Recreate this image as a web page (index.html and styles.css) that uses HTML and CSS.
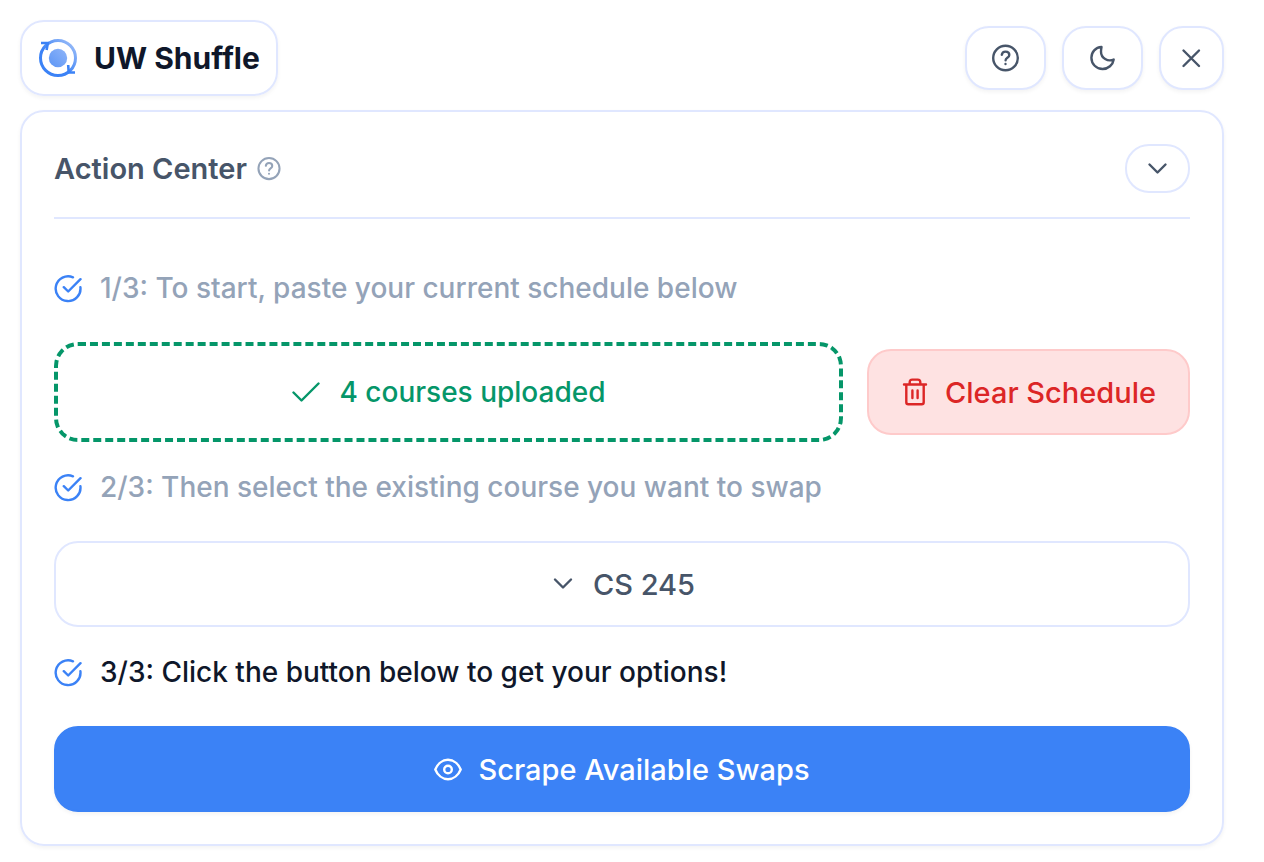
FILE: index.html
```html
<!DOCTYPE html>
<html lang="en">
<head>
  <meta charset="UTF-8">
  <meta name="viewport" content="width=device-width, initial-scale=1">
  <title>UW Shuffle</title>
  <link rel="stylesheet" href="styles.css">
</head>
<body>
  <header class="topbar">
    <div class="brand">
      <svg class="logo" viewBox="0 0 40 40" fill="none" aria-hidden="true">
        <defs>
          <linearGradient id="ring" x1="0" y1="1" x2="1" y2="0">
            <stop offset="0.4" stop-color="#3b82f6"/>
            <stop offset="0.9" stop-color="#93b8f8"/>
          </linearGradient>
          <linearGradient id="ball" x1="1" y1="0" x2="0" y2="1">
            <stop offset="0" stop-color="#8fb5f9"/>
            <stop offset="1" stop-color="#5c95f5"/>
          </linearGradient>
        </defs>
        <circle cx="20" cy="20" r="17.5" stroke="url(#ring)" stroke-width="3"/>
        <circle cx="20" cy="20" r="9.2" fill="url(#ball)"/>
        <path d="M3 5h6.800l-1.200 7M37 34.500h-6.300l-.5-7.500" stroke="#3b82f6" stroke-width="2.600"/>
      </svg>
      <h1>UW Shuffle</h1>
    </div>
    <div class="actions">
      <button class="icon-btn" type="button" aria-label="Help">
        <svg class="icon" viewBox="0 0 28 28">
          <circle cx="13.500" cy="14" r="12.300"/>
          <path d="M9.800 10.800c.3-2 1.700-3.200 3.700-3.200 2.200 0 3.800 1.300 3.800 3.300 0 2.900-3.700 2.800-3.700 5.300"/>
          <path d="M13.500 20v.1"/>
        </svg>
      </button>
      <button class="icon-btn" type="button" aria-label="Dark mode">
        <svg class="icon" viewBox="0 0 28 28">
          <path d="M12.500 3C6.500 3.300 2.400 8 2.400 13.800c0 6.200 5 11.200 11.200 11.200 5.700 0 10.300-4.100 11.100-9.500-5.800 2.600-12.700-1.300-12.700-7.700 0-1.700.2-3.200.5-4.800z"/>
        </svg>
      </button>
      <button class="icon-btn close-btn" type="button" aria-label="Close">
        <svg class="icon" viewBox="0 0 28 28">
          <path d="M5.500 6.500l15.500 15.500M21 6.500L5.500 22"/>
        </svg>
      </button>
    </div>
  </header>

  <main class="card">
    <div class="card-header">
      <h2>Action Center</h2>
      <svg class="icon hint" viewBox="0 0 28 28">
        <circle cx="14" cy="13.500" r="12.300"/>
        <path d="M10.300 10.300c.3-2 1.700-3.200 3.700-3.200 2.200 0 3.800 1.300 3.800 3.300 0 2.900-3.700 2.800-3.700 5.300"/>
        <path d="M14 19.500v.1"/>
      </svg>
      <button class="collapse-btn" type="button" aria-label="Collapse">
        <svg class="icon" viewBox="0 0 28 28"><path d="M5.500 9.500l8 8 8-8"/></svg>
      </button>
    </div>

    <p class="step done">
      <svg class="icon" viewBox="0 0 28 28">
        <path d="M19 2.300A12.400 12.400 0 1 0 26.400 12.200M9.800 12.200l4.400 4.300L26.500 4.200"/>
      </svg>
      1/3: To start, paste your current schedule below
    </p>
    <div class="upload-row">
      <div class="upload-box">
        <svg class="icon" viewBox="0 0 28 28"><path d="M1.500 14.500l8 8 17-17"/></svg>
        4 courses uploaded
      </div>
      <button class="btn clear-btn" type="button">
        <svg class="icon" viewBox="0 0 28 28">
          <path d="M3 6.500h22M5.300 6.500v17.700q0 2 2 2h13.400q2 0 2-2V6.500M8.700 6.500V4.200q0-2.600 2.600-2.600h5.400q2.600 0 2.600 2.600v2.300M11.400 12.500v7.500M16.600 12.500v7.500"/>
        </svg>
        Clear Schedule
      </button>
    </div>

    <p class="step done">
      <svg class="icon" viewBox="0 0 28 28">
        <path d="M19 2.300A12.400 12.400 0 1 0 26.400 12.200M9.800 12.200l4.400 4.300L26.500 4.200"/>
      </svg>
      2/3: Then select the existing course you want to swap
    </p>
    <label class="btn course-select">
      <svg class="icon" viewBox="0 0 28 28"><path d="M6 9.500l8 8 8-8"/></svg>
      <select aria-label="Course to swap">
        <option>CS 245</option>
      </select>
    </label>

    <p class="step">
      <svg class="icon" viewBox="0 0 28 28">
        <path d="M19 2.300A12.400 12.400 0 1 0 26.400 12.200M9.800 12.200l4.400 4.300L26.500 4.200"/>
      </svg>
      3/3: Click the button below to get your options!
    </p>
    <button class="btn scrape-btn" type="button">
      <svg class="icon" viewBox="0 0 28 28">
        <path d="M1.300 14.500C3.500 9 8.300 4.800 14 4.800S24.500 9 26.700 14.500C24.500 20 19.700 24.200 14 24.200S3.500 20 1.300 14.500z"/>
        <circle cx="14" cy="14.500" r="3.800"/>
      </svg>
      Scrape Available Swaps
    </button>
  </main>
</body>
</html>
```
FILE: styles.css
```css
* {
  box-sizing: border-box;
}
body {
  margin: 0;
  padding: 20px 40px 16px 20px;
  font-family: Inter, 'Liberation Sans', sans-serif;
  font-size: 28px;
  font-weight: 500;
  background: #fff;
  color: #0f172a;
}
h1, h2, p {
  margin: 0;
}
h1 {
  font-size: 30px;
  font-weight: 700;
}
h2 {
  font-size: 29px;
  font-weight: 600;
}
button, select {
  font: inherit;
  color: inherit;
  cursor: pointer;
}
.icon {
  width: 28px;
  height: 28px;
  flex: none;
  fill: none;
  stroke: currentColor;
  stroke-width: 2.4;
  stroke-linecap: round;
  stroke-linejoin: round;
}
.topbar {
  display: flex;
  align-items: center;
  justify-content: space-between;
  margin-bottom: 14px;
}
.brand {
  display: flex;
  align-items: center;
  gap: 16px;
  height: 76px;
  padding: 0 16px;
  border: 2px solid #e0e7ff;
  border-radius: 24px;
  box-shadow: 0 2px 4px rgba(0, 0, 0, 0.05);
}
.logo {
  width: 40px;
  height: 40px;
}
.actions {
  display: flex;
  gap: 16px;
}
.icon-btn, .collapse-btn {
  display: flex;
  align-items: center;
  justify-content: center;
  padding: 0;
  background: #fff;
  border: 2px solid #e0e7ff;
  border-radius: 24px;
  color: #475569;
}
.icon-btn {
  width: 81px;
  height: 64px;
  box-shadow: 0 2px 4px rgba(0, 0, 0, 0.05);
}
.close-btn {
  width: 65px;
}
.collapse-btn {
  width: 65px;
  height: 49px;
  margin-left: auto;
}
.card {
  padding: 32px;
  border: 2px solid #e0e7ff;
  border-radius: 24px;
  box-shadow: 0 2px 4px rgba(0, 0, 0, 0.05);
}
.card-header {
  display: flex;
  align-items: center;
  gap: 10px;
  padding-bottom: 24px;
  margin-bottom: 48px;
  border-bottom: 2px solid #e0e7ff;
  color: #475569;
}
.hint {
  width: 24px;
  height: 24px;
  color: #94a3b8;
}
.step {
  display: flex;
  align-items: center;
  gap: 18px;
  margin: 24px 0 32px;
  line-height: 43px;
}
.step .icon {
  color: #3b82f6;
}
.done {
  color: #94a3b8;
}
.upload-row {
  display: flex;
  align-items: center;
  gap: 24px;
}
.upload-box {
  display: flex;
  flex: 1;
  align-items: center;
  justify-content: center;
  gap: 20px;
  height: 100px;
  border: 4px dashed #059669;
  border-radius: 24px;
  color: #059669;
}
.btn {
  display: flex;
  align-items: center;
  justify-content: center;
  gap: 16px;
  height: 86px;
  padding: 0 32px;
  border: 2px solid #e0e7ff;
  border-radius: 24px;
  font-size: 29px;
}
.clear-btn {
  background: #fee2e2;
  border-color: #fecaca;
  color: #dc2626;
}
.course-select {
  color: #475569;
}
.course-select select {
  appearance: none;
  field-sizing: content;
  padding: 0;
  border: none;
  background: none;
}
.scrape-btn {
  width: 100%;
  background: #3b82f6;
  border-color: #3b82f6;
  color: #fff;
  box-shadow: 0 2px 4px rgba(0, 0, 0, 0.05);
}
```
